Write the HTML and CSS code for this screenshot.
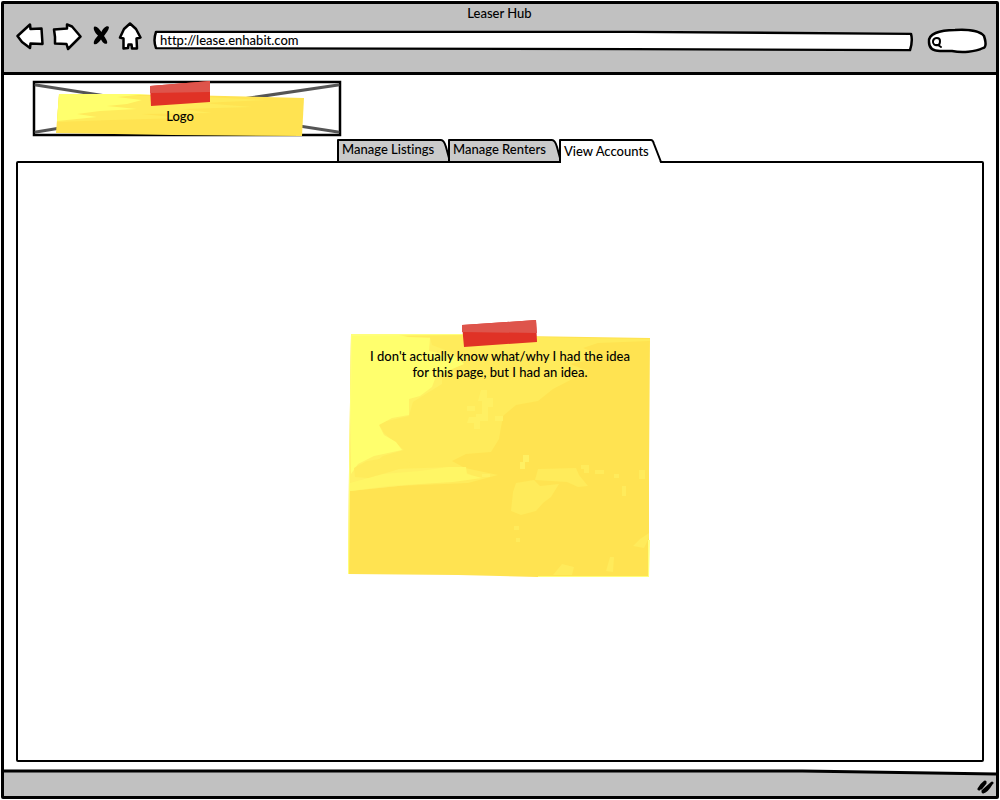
FILE: index.html
```html
<!DOCTYPE html>
<html lang="en">
<head>
<meta charset="utf-8">
<title>Leaser Hub</title>
<link rel="stylesheet" href="styles.css">
</head>
<body>
<div class="window">
  <header class="chrome">
    <h1 class="title">Leaser Hub</h1>
    <div class="toolbar">
      <button class="tool" type="button" aria-label="Back">
        <svg class="sketch" width="28" height="30" viewBox="0 0 28 30"><path d="M1.500 15 L14 3.500 L14.500 8 L25.500 7.500 L26.500 23 L14.500 22.500 L14 27 L6 21 Z"/></svg>
      </button>
      <button class="tool tool-forward" type="button" aria-label="Forward">
        <svg class="sketch" width="30" height="30" viewBox="0 0 30 30"><path d="M2 8.500 L15 7.500 L15 3.500 L20 5.500 L28.500 15.500 L16 28 L14.500 23 L3 22.500 L3 16 Z"/></svg>
      </button>
      <button class="tool tool-stop" type="button" aria-label="Stop">
        <svg width="18" height="30" viewBox="0 0 18 30"><path d="M2 6 C4 4 8 9 9.500 11 C11 7 15 4 17 6 C17 9 14 12 12 15 C14 18 16 21 15 22.500 C12 24 10 20 9 18.500 C7 21 4 24.500 2 23 C1 20 4 17 6 14.500 C3 12 1 8 2 6 Z"/></svg>
      </button>
      <button class="tool tool-home" type="button" aria-label="Home">
        <svg class="sketch" width="24" height="30" viewBox="0 0 24 30"><path d="M12 2.500 L18 8 L22.500 16.500 L18.500 17.500 L19 27.500 L14 27.500 L13.500 23.500 L10.500 23.500 L10 27 L5.500 27.500 L5.500 17.500 L2 16.500 L6 8 Z"/></svg>
      </button>
      <div class="address">
        <svg class="shape sketch" viewBox="0 0 760 23" preserveAspectRatio="none" aria-hidden="true"><path d="M2 2 L480 2 L759 4 Q761 11 758 21 L480 20 L2 19 Q-1 11 2 2 Z"/></svg>
        <input class="address-input" type="text" aria-label="Address" value="http://lease.enhabit.com">
      </div>
      <div class="search">
        <svg class="shape sketch" viewBox="0 0 60 26" preserveAspectRatio="none" aria-hidden="true"><path d="M2 14 C1 6 12 2 28 2 C44 1 54 4 57 8 C60 17 58 20 56 20 C48 24 35 25 25 23 L13 23 C6 23 2 20 2 14 Z"/></svg>
        <svg class="lens" width="12" height="14" viewBox="0 0 12 14" aria-hidden="true"><path d="M7 9 C4 10 1.500 8 2 5 C3 1 9 1 9 5 C9 8 8 9 7 9 L10 11"/></svg>
        <input class="search-input" type="search" aria-label="Search">
      </div>
    </div>
  </header>

  <main class="page">
    <div class="logo">
      <svg class="shape" viewBox="0 0 310 57" preserveAspectRatio="none" aria-hidden="true">
        <path class="box" d="M2 2 L308 2 L308 55 L2 55 Z"/>
        <path class="cross" d="M4 5 L150 28 L306 52 M4 52 L150 28 L306 5"/>
        <path fill="#ffe351" d="M27 14 L150 15 L272 18 L270 56 L140 55 L24 53 Z"/>
        <path fill="#ffeb5b" d="M27 15 L150 16 L235 20 L170 23 L220 27 L150 29 L180 33 L110 34 L150 38 L80 40 L25 42 Z"/>
        <path fill="#ffff6d" d="M27 14 L118 14 L85 17 L110 20 L95 24 L75 26 L105 29 L68 31 L45 34 L65 37 L25 41 Z"/>
        <path class="tape" d="M118 6 L178 1 L178 22 L119 26 Z"/>
        <path class="tape-light" d="M118 6 L178 1 L178 12 L118 13 Z"/>
      </svg>
      <span class="logo-text">Logo</span>
    </div>

    <nav class="tabs" aria-label="Sections">
      <button class="tab" type="button">
        <svg class="shape" viewBox="0 0 113 26" preserveAspectRatio="none" aria-hidden="true"><path class="tab-fill" d="M1 24 L1 2 L104 2 Q107 2 109 9 L112 20 L112 24 Z"/></svg>
        <span class="tab-text">Manage Listings</span>
      </button>
      <button class="tab" type="button">
        <svg class="shape" viewBox="0 0 113 26" preserveAspectRatio="none" aria-hidden="true"><path class="tab-fill" d="M1 24 L1 2 L104 2 Q107 2 109 9 L112 20 L112 24 Z"/></svg>
        <span class="tab-text">Manage Renters</span>
      </button>
      <button class="tab tab-active" type="button" aria-current="page">
        <svg class="shape" viewBox="0 0 104 26" preserveAspectRatio="none" aria-hidden="true"><path fill="#fff" d="M1 27 L1 2 L93 2 L102 27 Z"/><path class="tab-line" d="M1 25 L1 2 L92 2 Q94 2 95 6 L102 24"/></svg>
        <span class="tab-text">View Accounts</span>
      </button>
    </nav>

    <section class="panel">
      <div class="note">
        <svg class="shape" viewBox="0 0 304 260" preserveAspectRatio="none" aria-hidden="true">
          <path fill="#ffe351" d="M3 14 L120 15 L302 18 L301 150 L301 257 L190 257 L110 255 L0 254 L1 150 Z"/>
          <path fill="#ffeb5b" d="M3 16 L110 15 L230 18 L302 19 L302 21 L250 23 L235 28 L258 37 L222 44 L240 51 L205 69 L190 81 L168 85 L155 96 L151 119 L143 132 L118 134 L104 141 L117 148 L150 155 L120 163 L50 166 L2 171 Z"/>
          <path fill="#fff063" d="M3 15 L52 15 L62 17 L82 17 L84 25 L121 39 L94 55 L94 64 L65 82 L61 96 L30 103 L36 113 L56 130 L35 136 L20 148 L45 149 L105 147 L123 155 L80 163 L2 171 Z"/>
          <path fill="#ffff6d" d="M3 14 L50 15 L60 17 L82 18 L81 31 L109 37 L116 44 L88 56 L84 67 L72 76 L61 79 L61 95 L44 98 L31 105 L36 115 L48 122 L54 130 L26 136 L10 144 L3 154 Z"/>
          <path fill="#fff665" d="M2 163 L35 154 L72 151 L100 147 L118 147 L119 154 L134 158 L105 162 L40 166 L2 171 Z"/>
          <path fill="#ffeb5b" d="M6 148 L19 141 L45 137 L65 144 L45 151 L20 158 L7 157 Z"/>
          <path fill="#fff063" d="M133 70h6v8h6v9h-5v8h-6v-14h-4z M121 97h7v-3h12v7h-8v8h-6v-6h-7z M119 86h8v5h-8z M147 96h8v5h-8z M134 154h8v3h-8z M170 169h11v6h-11z M175 135h6v7h-4v7h-5v-7h3z"/>
          <path fill="#ffeb5b" d="M168 163 L186 160 L192 166 L211 164 L203 177 L195 183 L188 191 L173 195 L163 191 L165 172 Z M190 149 L228 148 L231 155 L240 166 L230 167 L219 162 L187 160 Z M166 206h5v4h-5z M168 218h4v4h-4z M233 145h8v8h-5v-4h-3z M247 150h9v4h-9z M274 166h4v10h-4z M266 154h5v4h-5z M291 150h6v9h-6z M301 213 L292 219 L285 226 L296 228 L301 218 Z M262 237 L266 237 L265 252 L258 251 Z M214 244 L226 247 L224 255 L205 255 Z"/>
          <path fill="#ffff7b" d="M3 14 L121 14 L121 15 L4 16 L2 160 L1 254 L0 254 L1 150 Z M300 220 L302 220 L301 257 L190 257 L190 256 L300 256 Z"/>
          <path class="tape" d="M114 5 L188 0 L189 22 L116 27 Z"/>
          <path class="tape-light" d="M114 5 L188 0 L189 13 L114 12 Z"/>
        </svg>
        <p class="note-text">I don't actually know what/why I had the idea<br>for this page, but I had an idea.</p>
      </div>
    </section>
  </main>

  <footer class="status">
    <svg class="shape" viewBox="0 0 994 26" preserveAspectRatio="none" aria-hidden="true"><path fill="#c1c1c1" d="M0 1 L500 1 L880 2 L994 5 V26 H0 Z"/><path class="outline" d="M0 1 L500 1 L800 1 L994 4"/></svg>
    <svg class="grip" width="18" height="16" viewBox="0 0 18 16" aria-hidden="true"><path d="M2 10 Q4 6 8 3 M4 9 L8 4 M6 12 L15 4 M6 13 Q10 12 14 5"/></svg>
  </footer>
</div>
</body>
</html>
```
FILE: styles.css
```css
* {
  box-sizing: border-box;
}

body {
  margin: 0;
  background: #fff;
  color: #000;
  font-family: Lato, "Open Sans", sans-serif;
  font-size: 13px;
  font-weight: 500;
  font-variant-ligatures: none;
  line-height: 16px;
}

button,
input {
  margin: 0;
  padding: 0;
  border: 0;
  background: none;
  color: inherit;
  font: inherit;
  font-variant-ligatures: none;
}

button {
  cursor: pointer;
}

.window {
  display: flex;
  flex-direction: column;
  min-height: calc(100vh - 2px);
  margin: 1px;
  border: 3px solid #000;
  border-radius: 2px;
}

.shape {
  position: absolute;
  inset: 0;
  width: 100%;
  height: 100%;
  overflow: visible;
}

.sketch {
  fill: #fff;
  stroke: #000;
  stroke-width: 2.5px;
  stroke-linejoin: round;
}

.outline {
  fill: none;
  stroke: #000;
  stroke-width: 3px;
  stroke-linejoin: round;
}

.chrome {
  padding: 1px 9px 18px 12px;
  border-bottom: 3px solid #000;
  background: #c1c1c1;
}

.title {
  margin: 0;
  padding-right: 4px;
  font-size: 13px;
  font-weight: 500;
  line-height: 16px;
  text-align: center;
}

.toolbar {
  display: flex;
  align-items: flex-start;
}

.tool {
  display: block;
  flex: none;
  height: 30px;
}

.tool svg {
  display: block;
}

.tool-forward {
  margin-left: 8px;
}

.tool-stop {
  margin-left: 10px;
}

.tool-home {
  margin-left: 8px;
}

.address {
  position: relative;
  flex: 1;
  height: 22px;
  margin: 9px 15px 0 12px;
  padding: 2px 6px;
}

.address-input {
  position: relative;
  display: block;
  width: 100%;
  height: 16px;
  outline: none;
}

.search {
  position: relative;
  flex: none;
  width: 60px;
  height: 26px;
  margin-top: 7px;
  padding: 5px 8px 5px 18px;
}

.search-input {
  position: relative;
  display: block;
  width: 100%;
  height: 16px;
  outline: none;
  appearance: none;
}

.lens {
  position: absolute;
  top: 8px;
  left: 4px;
  fill: none;
  stroke: #000;
  stroke-width: 2px;
  stroke-linecap: round;
}

.page {
  display: flex;
  flex: 1;
  flex-direction: column;
  padding: 5px 12px 8px;
}

.logo {
  position: relative;
  width: 310px;
  height: 57px;
  margin-left: 16px;
  padding: 28px 14px 0 0;
  text-align: center;
}

.logo-text {
  position: relative;
}

.box {
  fill: #fff;
  stroke: #000;
  stroke-width: 2.5px;
}

.cross {
  fill: none;
  stroke: #555;
  stroke-width: 3px;
  stroke-linecap: round;
}

.tape {
  fill: #e03226;
}

.tape-light {
  fill: #de544b;
}

.tabs {
  position: relative;
  display: flex;
  justify-content: center;
  height: 26px;
  margin-top: 1px;
}

.tab {
  position: relative;
  width: 113px;
  height: 26px;
  margin-right: -2px;
  padding: 0 0 4px 5px;
  text-align: left;
}

.tab-active {
  width: 104px;
  margin-right: 0;
  padding-bottom: 0;
}

.tab-text {
  position: relative;
  white-space: nowrap;
}

.tab-fill {
  fill: #cacaca;
  stroke: #000;
  stroke-width: 2px;
  stroke-linejoin: round;
}

.tab-line {
  fill: none;
  stroke: #000;
  stroke-width: 2px;
  stroke-linejoin: round;
}

.panel {
  display: flex;
  flex: 1;
  align-items: center;
  justify-content: center;
  margin-top: -3px;
  padding-bottom: 24px;
  border: 2px solid #000;
  border-radius: 2px;
}

.note {
  position: relative;
  width: 304px;
  min-height: 260px;
  padding: 28px 16px 16px;
}

.note-text {
  position: relative;
  margin: 0;
  text-align: center;
}

.status {
  position: relative;
  display: flex;
  justify-content: flex-end;
  height: 26px;
  padding: 9px 1px 0 0;
}

.grip {
  position: relative;
  fill: none;
  stroke: #000;
  stroke-width: 3px;
  stroke-linecap: round;
}
```
